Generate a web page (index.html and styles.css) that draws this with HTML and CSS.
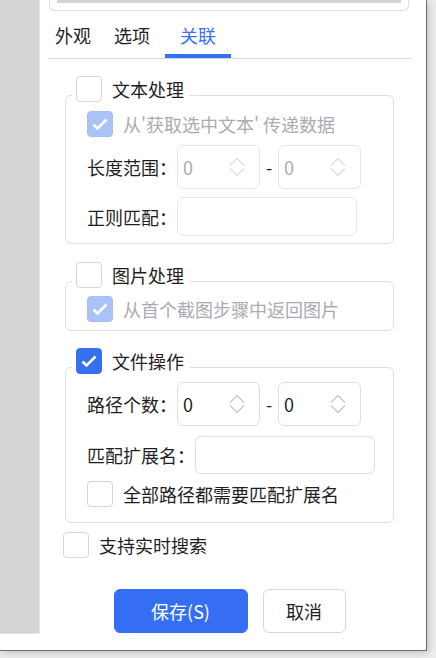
FILE: index.html
```html
<!DOCTYPE html>
<html lang="zh">
<head>
<meta charset="utf-8">
<link rel="stylesheet" href="styles.css">
</head>
<body>
<div class="window">
  <div class="sidebar"></div>
  <div class="main">
    <div class="card"><div class="card-bar"></div></div>
    <div class="tabs">
      <div class="tab tab-first">外观</div>
      <div class="tab">选项</div>
      <div class="tab active">关联</div>
    </div>

    <div class="group g1">
      <div class="group-title"><span class="cb"></span><span>文本处理</span></div>
      <div class="row check-row cr1">
        <span class="cb checked disabled"><svg width="24" height="24" viewBox="0 0 24 24"><path d="M5.5 12.5 L9.5 16.5 L18.5 7.5" fill="none" stroke="#fff" stroke-width="2.6"/></svg></span>
        <span class="muted">从'获取选中文本' 传递数据</span>
      </div>
      <div class="row spin-row">
        <span class="label">长度范围：</span>
        <div class="spin disabled"><span>0</span><svg width="16" height="20" viewBox="0 0 16 20"><path d="M1 8.5 L8 1.5 L15 8.5 M1 11.5 L8 18.5 L15 11.5" fill="none" stroke="#dcdfe4" stroke-width="1.3"/></svg></div>
        <span class="dash">-</span>
        <div class="spin disabled"><span>0</span><svg width="16" height="20" viewBox="0 0 16 20"><path d="M1 8.5 L8 1.5 L15 8.5 M1 11.5 L8 18.5 L15 11.5" fill="none" stroke="#dcdfe4" stroke-width="1.3"/></svg></div>
      </div>
      <div class="row input-row">
        <span class="label">正则匹配：</span>
        <div class="input regex"></div>
      </div>
    </div>

    <div class="group g2">
      <div class="group-title"><span class="cb"></span><span>图片处理</span></div>
      <div class="row check-row cr2">
        <span class="cb checked disabled"><svg width="24" height="24" viewBox="0 0 24 24"><path d="M5.5 12.5 L9.5 16.5 L18.5 7.5" fill="none" stroke="#fff" stroke-width="2.6"/></svg></span>
        <span class="muted">从首个截图步骤中返回图片</span>
      </div>
    </div>

    <div class="group g3">
      <div class="group-title"><span class="cb checked"><svg width="24" height="24" viewBox="0 0 24 24"><path d="M5.5 12.5 L9.5 16.5 L18.5 7.5" fill="none" stroke="#fff" stroke-width="2.6"/></svg></span><span>文件操作</span></div>
      <div class="row spin-row">
        <span class="label">路径个数：</span>
        <div class="spin"><span>0</span><svg width="16" height="20" viewBox="0 0 16 20"><path d="M1 8.5 L8 1.5 L15 8.5 M1 11.5 L8 18.5 L15 11.5" fill="none" stroke="#c4c8ce" stroke-width="1.3"/></svg></div>
        <span class="dash">-</span>
        <div class="spin"><span>0</span><svg width="16" height="20" viewBox="0 0 16 20"><path d="M1 8.5 L8 1.5 L15 8.5 M1 11.5 L8 18.5 L15 11.5" fill="none" stroke="#c4c8ce" stroke-width="1.3"/></svg></div>
      </div>
      <div class="row input-row ext-row">
        <span class="label">匹配扩展名：</span>
        <div class="input ext"></div>
      </div>
      <div class="row check-row cr3">
        <span class="cb"></span>
        <span>全部路径都需要匹配扩展名</span>
      </div>
    </div>

    <div class="row check-row realtime">
      <span class="cb"></span>
      <span>支持实时搜索</span>
    </div>

    <div class="buttons">
      <button class="btn primary">保存(S)</button>
      <button class="btn">取消</button>
    </div>
  </div>
</div>
</body>
</html>
```

FILE: styles.css
```css
* { box-sizing: border-box; }
html, body { margin: 0; padding: 0; }
body {
  width: 436px;
  height: 658px;
  overflow: hidden;
  background: #ededed;
  font-family: "Noto Sans CJK SC", "Noto Sans", sans-serif;
  font-size: 18px;
  line-height: 26px;
  color: #1f1f1f;
}
.window {
  width: 427px;
  height: 651px;
  background: #fff;
  border-right: 1px solid #6b6b6b;
  border-bottom: 1px solid #6b6b6b;
  box-shadow: 1px 1px 8px rgba(0, 0, 0, 0.22);
  display: flex;
  align-items: flex-start;
}
.sidebar {
  width: 40px;
  height: 634px;
  flex: none;
  background: #d4d4d4;
  border-right: 1px solid #e6e6e6;
  border-bottom: 1px solid #e6e6e6;
}
.main {
  flex: 1;
  display: flex;
  flex-direction: column;
  padding: 0 15px 0 8px;
}
.card {
  height: 11px;
  margin: 0 2px 0 1px;
  border: 1px solid #d9dee5;
  border-top: none;
  border-radius: 0 0 6px 6px;
  padding: 0 7px;
}
.card-bar {
  height: 3px;
  background: #d4d4d4;
}
.tabs {
  display: flex;
  height: 48px;
  border-bottom: 1px solid #d3d7de;
}
.tab {
  display: flex;
  align-items: center;
  padding: 0 15px 0 8px;
}
.tab-first { padding-left: 7px; }
.tab.active {
  padding-left: 15px;
  color: #3d71f0;
  box-shadow: inset 0 -4px 0 #3670f0;
}
.group {
  margin: 0 17px;
  border: 1px solid #dcdfe6;
  border-radius: 6px;
  padding: 0 0 7px 21px;
}
.g1 { margin-top: 36px; }
.g2 { margin-top: 37px; padding-bottom: 8px; }
.g3 { margin-top: 36px; padding-bottom: 15px; }
.group-title {
  display: flex;
  align-items: center;
  gap: 10px;
  width: fit-content;
  margin: -20px 0 0 -15px;
  padding: 0 6px 0 4px;
  background: #fff;
}
.row {
  display: flex;
  align-items: center;
}
.check-row { gap: 10px; }
.cr1 { margin-top: 9px; }
.cr2 { margin-top: 8px; }
.cr3 { margin-top: 7px; }
.spin-row { margin-top: 8px; }
.input-row { margin-top: 8px; }
.ext-row { margin-top: 10px; }
.realtime { margin: 9px 0 0 15px; }
.cb {
  width: 26px;
  height: 26px;
  flex: none;
  border: 1px solid #d3d6dc;
  border-radius: 4px;
  background: #fff;
  display: flex;
  align-items: center;
  justify-content: center;
}
.cb.checked {
  background: #3670ee;
  border-color: #3670ee;
}
.cb.checked.disabled {
  background: #abc2f8;
  border-color: #a6bef5;
}
.muted { color: #a8abb2; }
.label { white-space: nowrap; }
.spin {
  width: 83px;
  height: 44px;
  border: 1px solid #dcdfe6;
  border-radius: 6px;
  display: flex;
  align-items: center;
  justify-content: space-between;
  padding: 0 14px 0 5px;
  color: #1f1f1f;
}
.spin.disabled {
  border-color: #e4e7ec;
  color: #a8abb2;
}
.dash {
  width: 18px;
  text-align: center;
}
.input {
  width: 180px;
  border: 1px solid #dcdfe6;
  border-radius: 6px;
}
.input.regex { height: 39px; border-color: #e4e7ec; }
.input.ext { height: 38px; }
.buttons {
  margin-top: 31px;
  display: flex;
  justify-content: center;
  gap: 15px;
}
.btn {
  height: 44px;
  width: 83px;
  border: 1px solid #d3d6dc;
  border-radius: 6px;
  background: #fff;
  color: #1f1f1f;
  font-family: inherit;
  font-size: 18px;
  padding: 0;
}
.btn.primary {
  width: 134px;
  background: #356ef3;
  border-color: #356ef3;
  color: #fff;
}
```
